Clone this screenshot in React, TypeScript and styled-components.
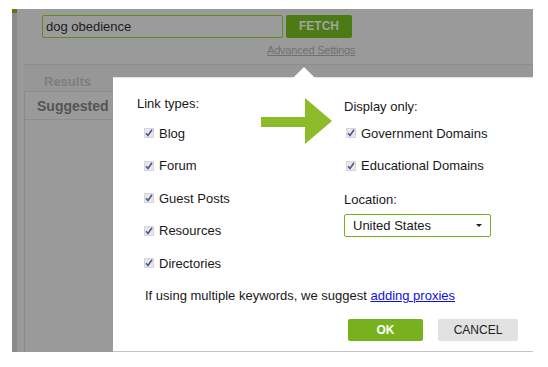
import React from 'react';
import styled, { createGlobalStyle } from 'styled-components';

const GlobalStyle = createGlobalStyle`
  html, body {
    margin: 0;
    padding: 0;
    background: #ffffff;
  }
  body {
    font-family: 'Liberation Sans', Arial, sans-serif;
    font-size: 13px;
  }
`;

const Frame = styled.div`
  position: relative;
  margin: 9px 0 0 12px;
  width: 521px;
  height: 343px;
  background: #9a9a9a;
  display: flex;
  overflow: hidden;
`;

const Sidebar = styled.div`
  width: 5px;
  flex-shrink: 0;
  background: #8b8b8b;
  border-top: 4px solid #567a18;
`;

const Main = styled.div`
  flex: 1;
  display: flex;
  flex-direction: column;
`;

const SearchArea = styled.div`
  height: 55px;
  padding-left: 25px;
  position: relative;
`;

const KeywordLabel = styled.div`
  position: absolute;
  left: 13px;
  top: -11px;
  height: 11px;
  overflow: hidden;
  font-weight: bold;
  font-size: 13px;
  line-height: 16px;
  color: #555;
`;

const SearchRow = styled.div`
  display: flex;
  gap: 3px;
  padding-top: 6px;
`;

const KeywordInput = styled.div`
  width: 236px;
  height: 21px;
  border: 1px solid #5e8a1e;
  border-radius: 2px;
  background: #9b9b9b;
  color: #1c1c1c;
  font-size: 13px;
  line-height: 21px;
  padding-left: 3px;
`;

const FetchButton = styled.div`
  width: 66px;
  height: 23px;
  background: #4c7a14;
  border-radius: 2px;
  color: #a3a3a3;
  font-weight: bold;
  font-size: 12px;
  line-height: 23px;
  text-align: center;
`;

const AdvancedLink = styled.div`
  margin: 6px 0 0 225px;
  font-size: 11px;
  letter-spacing: -0.2px;
  color: #707070;
  text-decoration: underline;
`;

const ResultsArea = styled.div`
  flex: 1;
  margin-left: 7px;
  border-top: 1px solid #8d8d8d;
  display: flex;
  flex-direction: column;
`;

const TabBand = styled.div`
  height: 26px;
  background: #979797;
  padding-left: 20px;
  display: flex;
  align-items: flex-end;
`;

const TabLabel = styled.div`
  font-weight: bold;
  font-size: 13px;
  color: #7e7e7e;
  padding-bottom: 2px;
`;

const Panel = styled.div`
  flex: 1;
  border-left: 1px solid #8a8a8a;
  border-top: 1px solid #8d8d8d;
`;

const PanelHeader = styled.div`
  width: 76px;
  height: 25px;
  padding: 2px 0 0 12px;
  box-sizing: content-box;
  overflow: hidden;
  font-weight: bold;
  font-size: 14px;
  line-height: 25px;
  color: #545454;
  white-space: nowrap;
`;

const HeaderRule = styled.div`
  border-bottom: 1px solid #8d8d8d;
`;

const Modal = styled.div`
  position: absolute;
  left: 101px;
  top: 68px;
  width: 420px;
  height: 273px;
  background: #ffffff;
  border-top: 1px solid #e2e2e2;
  border-bottom: 2px solid #c4c4c4;
  display: flex;
  flex-direction: column;
  color: #181820;
`;

const Notch = styled.div`
  position: absolute;
  top: -11px;
  left: 180px;
  width: 0;
  height: 0;
  border-left: 11px solid transparent;
  border-right: 11px solid transparent;
  border-bottom: 11px solid #ffffff;
`;

const Pointer = styled.svg`
  position: absolute;
  left: 148px;
  top: 20px;
`;

const Columns = styled.div`
  display: flex;
  padding: 18px 0 0 24px;
`;

const Column = styled.div<{ width: number; offset?: number }>`
  width: ${p => p.width}px;
  display: flex;
  flex-direction: column;
  padding-top: ${p => p.offset || 0}px;
`;

const Heading = styled.div<{ gap: number }>`
  height: 16px;
  line-height: 16px;
  margin-bottom: ${p => p.gap}px;
`;

const CheckRow = styled.div<{ indent: number }>`
  height: 32.5px;
  display: flex;
  align-items: center;
  gap: 5px;
  padding-left: ${p => p.indent}px;
`;

const LocationLabel = styled.div`
  height: 16px;
  line-height: 16px;
  margin: 10px 0 6px;
`;

const Select = styled.div`
  width: 147px;
  height: 23px;
  box-sizing: border-box;
  border: 1px solid #77b21e;
  border-radius: 2px;
  display: flex;
  align-items: center;
  justify-content: space-between;
  padding: 0 8px 0 8px;
  font-size: 13px;
`;

const Caret = styled.div`
  width: 0;
  height: 0;
  border-left: 3px solid transparent;
  border-right: 3px solid transparent;
  border-top: 3px solid #222;
`;

const Note = styled.div`
  padding-left: 32px;
  margin-top: 9px;
  height: 16px;
  line-height: 16px;
`;

const ProxyLink = styled.span`
  color: #1010e0;
  text-decoration: underline;
`;

const ButtonRow = styled.div`
  display: flex;
  justify-content: flex-end;
  gap: 15px;
  padding-right: 15px;
  margin-top: 15px;
`;

const Button = styled.div<{ primary?: boolean }>`
  width: ${p => (p.primary ? 75 : 80)}px;
  height: 22px;
  line-height: 22px;
  text-align: center;
  border-radius: 2px;
  font-size: 12px;
  font-weight: ${p => (p.primary ? 'bold' : 'normal')};
  background: ${p => (p.primary ? '#77b21e' : '#e1e1e1')};
  color: ${p => (p.primary ? '#ffffff' : '#222')};
`;

function CheckBox() {
  return (
    <svg width="10" height="10" viewBox="0 0 10 10">
      <rect x="0" y="0" width="10" height="10" fill="#d6d6d6" />
      <rect x="1" y="1" width="8" height="8" fill="#e8e8e8" />
      <path d="M2 5.2 L4 7.5 L8 1.8" fill="none" stroke="#4a5794" strokeWidth="1.6" />
    </svg>
  );
}

function Check(props: { label: string; indent: number }) {
  return (
    <CheckRow indent={props.indent}>
      <CheckBox />
      <span>{props.label}</span>
    </CheckRow>
  );
}

const linkTypes = ['Blog', 'Forum', 'Guest Posts', 'Resources', 'Directories'];

export default function App() {
  return (
    <>
      <GlobalStyle />
      <Frame>
        <Sidebar />
        <Main>
          <SearchArea>
            <KeywordLabel>Keywords</KeywordLabel>
            <SearchRow>
              <KeywordInput>dog obedience</KeywordInput>
              <FetchButton>FETCH</FetchButton>
            </SearchRow>
            <AdvancedLink>Advanced Settings</AdvancedLink>
          </SearchArea>
          <ResultsArea>
            <TabBand>
              <TabLabel>Results</TabLabel>
            </TabBand>
            <Panel>
              <PanelHeader>Suggested URLs</PanelHeader>
              <HeaderRule />
            </Panel>
          </ResultsArea>
        </Main>
        <Modal>
          <Notch />
          <Pointer width="71" height="46" viewBox="0 0 71 46">
            <polygon points="0,19 44,19 44,0 71,23 44,46 44,29 0,29" fill="#8cbc2a" />
          </Pointer>
          <Columns>
            <Column width={207}>
              <Heading gap={4.75}>Link types:</Heading>
              {linkTypes.map(t => (
                <Check key={t} label={t} indent={7} />
              ))}
            </Column>
            <Column width={180} offset={3}>
              <Heading gap={1.75}>Display only:</Heading>
              <Check label="Government Domains" indent={2} />
              <Check label="Educational Domains" indent={2} />
              <LocationLabel>Location:</LocationLabel>
              <Select>
                <span>United States</span>
                <Caret />
              </Select>
            </Column>
          </Columns>
          <Note>
            If using multiple keywords, we suggest <ProxyLink>adding proxies</ProxyLink>
          </Note>
          <ButtonRow>
            <Button primary>OK</Button>
            <Button>CANCEL</Button>
          </ButtonRow>
        </Modal>
      </Frame>
    </>
  );
}
